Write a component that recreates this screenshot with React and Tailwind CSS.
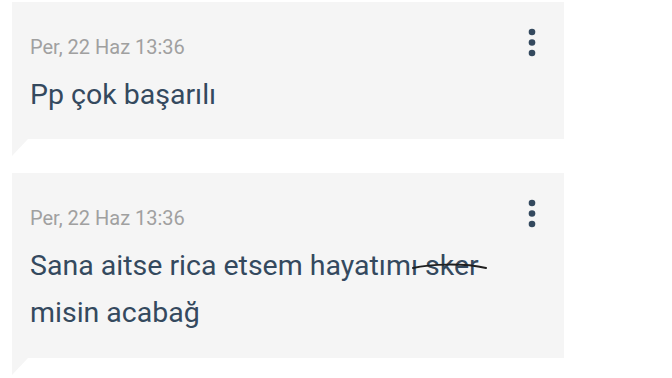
import React from "react";

const Dots = () => (
  <svg
    className="absolute top-[23px] right-[25px]"
    width="14"
    height="36"
    viewBox="0 0 14 36"
  >
    <circle cx="7" cy="7" r="3.3" fill="#34495e" />
    <circle cx="7" cy="17.5" r="3.3" fill="#34495e" />
    <circle cx="7" cy="28" r="3.3" fill="#34495e" />
  </svg>
);

const Tail = () => (
  <div className="w-[16px] h-[17px] bg-[#f5f5f5] [clip-path:polygon(0_0,100%_0,0_100%)]" />
);

const Bubble = ({ time, children, className }) => (
  <div>
    <div className={`relative bg-[#f5f5f5] pl-[18px] pt-[33px] ${className}`}>
      <div className="text-[20px] leading-[24px] text-[#a0a0a0]">{time}</div>
      <div className="mt-[12px] text-[28.5px] leading-[47px] text-[#34495e]">
        {children}
      </div>
      <Dots />
    </div>
    <Tail />
  </div>
);

const App = () => {
  return (
    <div className="w-[672px] h-[378px] bg-white overflow-hidden font-['Roboto',sans-serif]">
      <div className="w-[552px] ml-[12px] pt-[2px] flex flex-col gap-[17px]">
        <Bubble time="Per, 22 Haz 13:36" className="pb-[21px]">
          Pp çok başarılı
        </Bubble>

        <Bubble time="Per, 22 Haz 13:36" className="pb-[22px]">
          <span className="relative">
            Sana aitse rica etsem hayatımı sker
            {/* scribbled strike line */}
            <svg
              className="absolute right-[-9px] top-[13px]"
              width="76"
              height="10"
              viewBox="0 0 76 10"
            >
              <path
                d="M1 6 C 18 2, 52 1, 74 6"
                fill="none"
                stroke="#1f1f1f"
                strokeWidth="2"
                strokeLinecap="round"
              />
            </svg>
          </span>
          <br />
          misin acabağ
        </Bubble>
      </div>
    </div>
  );
};

export default App;
